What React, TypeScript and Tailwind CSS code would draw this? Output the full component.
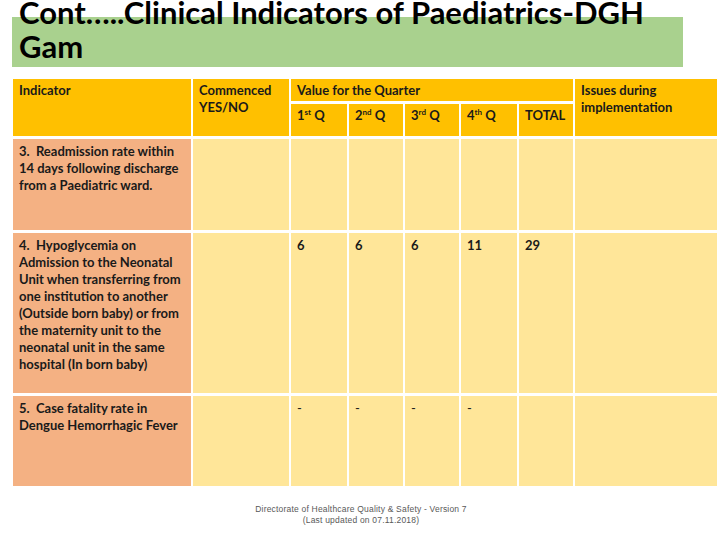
import React from "react";

const cellFont = "font-['Lato',_'Open_Sans',_sans-serif]";

function Q({ n, s }: { n: string; s: string }) {
  return (
    <span>
      {n}
      <span className="text-[8px] relative top-[-5px] leading-none">{s}</span> Q
    </span>
  );
}

export default function App() {
  const hdr = "bg-[#FFC000] text-[#1a1a1a] pl-[6px] pt-[3px]";
  const ind = "bg-[#F4B183] text-[#1a1a1a] pl-[6px] pt-[4px] pr-[2px]";
  const dat = "bg-[#FFE699] text-[#1a1a1a] pl-[6px] pt-[4px]";
  return (
    <div className="w-[720px] h-[540px] bg-white overflow-hidden relative">
      <div className="pt-[17px] pl-[12px]">
        <div className="w-[671px] h-[50px] bg-[#A9D18E] flow-root">
          <div className="mt-[-22px] pl-[7px] text-[31px] leading-[34px] font-bold text-black font-['Lato',_sans-serif] whitespace-nowrap">
            Cont…..Clinical Indicators of Paediatrics-DGH
            <br />
            Gam
          </div>
        </div>
      </div>

      <div
        className={`mt-[12px] ml-[13px] grid grid-cols-[178px_96px_56px_54px_54px_56px_54px_142px] grid-rows-[22px_32px_91px_160px_90px] gap-x-[2px] gap-y-[3px] text-[13px] leading-[17px] font-bold ${cellFont}`}
      >
        <div className={`${hdr} row-span-2`}>Indicator</div>
        <div className={`${hdr} row-span-2`}>
          Commenced
          <br />
          YES/NO
        </div>
        <div className={`${hdr} col-span-5`}>Value for the Quarter</div>
        <div className={`${hdr} row-span-2 pr-[4px]`}>
          Issues during
          <br />
          implementation
        </div>
        <div className={`${hdr} pt-[2px]`}><Q n="1" s="st" /></div>
        <div className={`${hdr} pt-[2px]`}><Q n="2" s="nd" /></div>
        <div className={`${hdr} pt-[2px]`}><Q n="3" s="rd" /></div>
        <div className={`${hdr} pt-[2px]`}><Q n="4" s="th" /></div>
        <div className={`${hdr} pt-[2px]`}>TOTAL</div>

        <div className={ind}>
          3.&nbsp; Readmission rate within 14 days following discharge from a Paediatric ward.
        </div>
        <div className={dat}></div>
        <div className={dat}></div>
        <div className={dat}></div>
        <div className={dat}></div>
        <div className={dat}></div>
        <div className={dat}></div>
        <div className={dat}></div>

        <div className={ind}>
          4.&nbsp; Hypoglycemia on Admission to the Neonatal Unit when transferring from one institution to another (Outside born baby) or from the maternity unit to the neonatal unit in the same hospital (In born baby)
        </div>
        <div className={dat}></div>
        <div className={dat}>6</div>
        <div className={dat}>6</div>
        <div className={dat}>6</div>
        <div className={dat}>11</div>
        <div className={dat}>29</div>
        <div className={dat}></div>

        <div className={ind}>
          5.&nbsp; Case fatality rate in Dengue Hemorrhagic Fever
        </div>
        <div className={dat}></div>
        <div className={`${dat} font-normal`}>-</div>
        <div className={`${dat} font-normal`}>-</div>
        <div className={`${dat} font-normal`}>-</div>
        <div className={`${dat} font-normal`}>-</div>
        <div className={dat}></div>
        <div className={dat}></div>
      </div>

      <div className="mt-[18px] text-center text-[8.5px] leading-[11px] text-[#595959] tracking-[0.2px] font-['Liberation_Sans',_Arial,_sans-serif] pl-[2px]">
        Directorate of Healthcare Quality &amp; Safety - Version 7
        <br />
        (Last updated on 07.11.2018)
      </div>
    </div>
  );
}
